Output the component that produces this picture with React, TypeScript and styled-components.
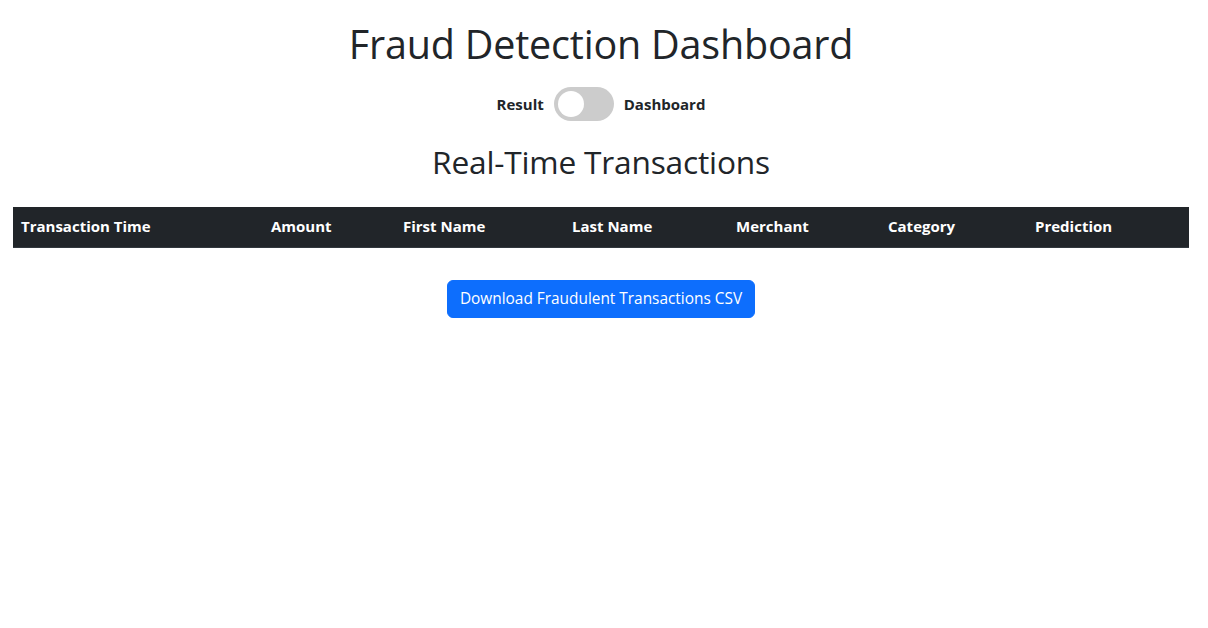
import React from "react";
import styled, { createGlobalStyle } from "styled-components";

const Global = createGlobalStyle`
  html, body { margin: 0; padding: 0; background: #fff; }
  body {
    font-family: "Open Sans", "Noto Sans", sans-serif;
    color: #212529;
    font-size: 16px;
    line-height: 1.5;
  }
  * { box-sizing: border-box; }
`;

const Page = styled.div`
  padding: 20px 19px 0 13px;
  display: flex;
  flex-direction: column;
  align-items: center;
`;

const Title = styled.h1`
  margin: 0;
  font-size: 39.5px;
  font-weight: 400;
  line-height: 48px;
  letter-spacing: -0.2px;
  text-align: center;
`;

const ToggleRow = styled.div`
  margin-top: 19px;
  display: flex;
  align-items: center;
  gap: 10px;
  font-weight: 700;
  font-size: 15px;
`;

const Switch = styled.label<{ $on: boolean }>`
  position: relative;
  display: inline-block;
  width: 60px;
  height: 34px;
  border-radius: 34px;
  background: ${(p) => (p.$on ? "#2196f3" : "#ccc")};
  cursor: pointer;
`;

const Knob = styled.span<{ $on: boolean }>`
  position: absolute;
  top: 4px;
  left: ${(p) => (p.$on ? "30px" : "4px")};
  width: 26px;
  height: 26px;
  border-radius: 50%;
  background: #fff;
`;

const Subtitle = styled.h2`
  margin: 22px 0 0;
  font-size: 31.7px;
  font-weight: 400;
  line-height: 38px;
  letter-spacing: -0.2px;
`;

const Table = styled.table`
  margin-top: 26px;
  width: 100%;
  border-collapse: collapse;
  table-layout: fixed;
`;

const Th = styled.th<{ $w: number }>`
  width: ${(p) => p.$w}px;
  background: #212529;
  color: #fff;
  text-align: left;
  font-weight: 700;
  font-size: 15px;
  padding: 7px 8px 9px;
  height: 40px;
  border-bottom: 1px solid #32383e;
`;

const Button = styled.button`
  margin-top: 32px;
  background: #0d6efd;
  color: #fff;
  border: 1px solid #0d6efd;
  border-radius: 6px;
  font-family: inherit;
  font-size: 15.4px;
  font-weight: 400;
  line-height: 24px;
  padding: 6px 12px;
  height: 38px;
  cursor: pointer;
`;

const columns: [string, number][] = [
  ["Transaction Time", 250],
  ["Amount", 132],
  ["First Name", 169],
  ["Last Name", 164],
  ["Merchant", 152],
  ["Category", 147],
  ["Prediction", 162],
];

export default function App() {
  const [on, setOn] = React.useState(false);
  return (
    <>
      <Global />
      <Page>
        <Title>Fraud Detection Dashboard</Title>
        <ToggleRow>
          <span>Result</span>
          <Switch $on={on} onClick={() => setOn(!on)}>
            <Knob $on={on} />
          </Switch>
          <span>Dashboard</span>
        </ToggleRow>
        <Subtitle>Real-Time Transactions</Subtitle>
        <Table>
          <thead>
            <tr>
              {columns.map(([c, w]) => (
                <Th key={c} $w={w}>
                  {c}
                </Th>
              ))}
            </tr>
          </thead>
          <tbody></tbody>
        </Table>
        <Button>Download Fraudulent Transactions CSV</Button>
      </Page>
    </>
  );
}
